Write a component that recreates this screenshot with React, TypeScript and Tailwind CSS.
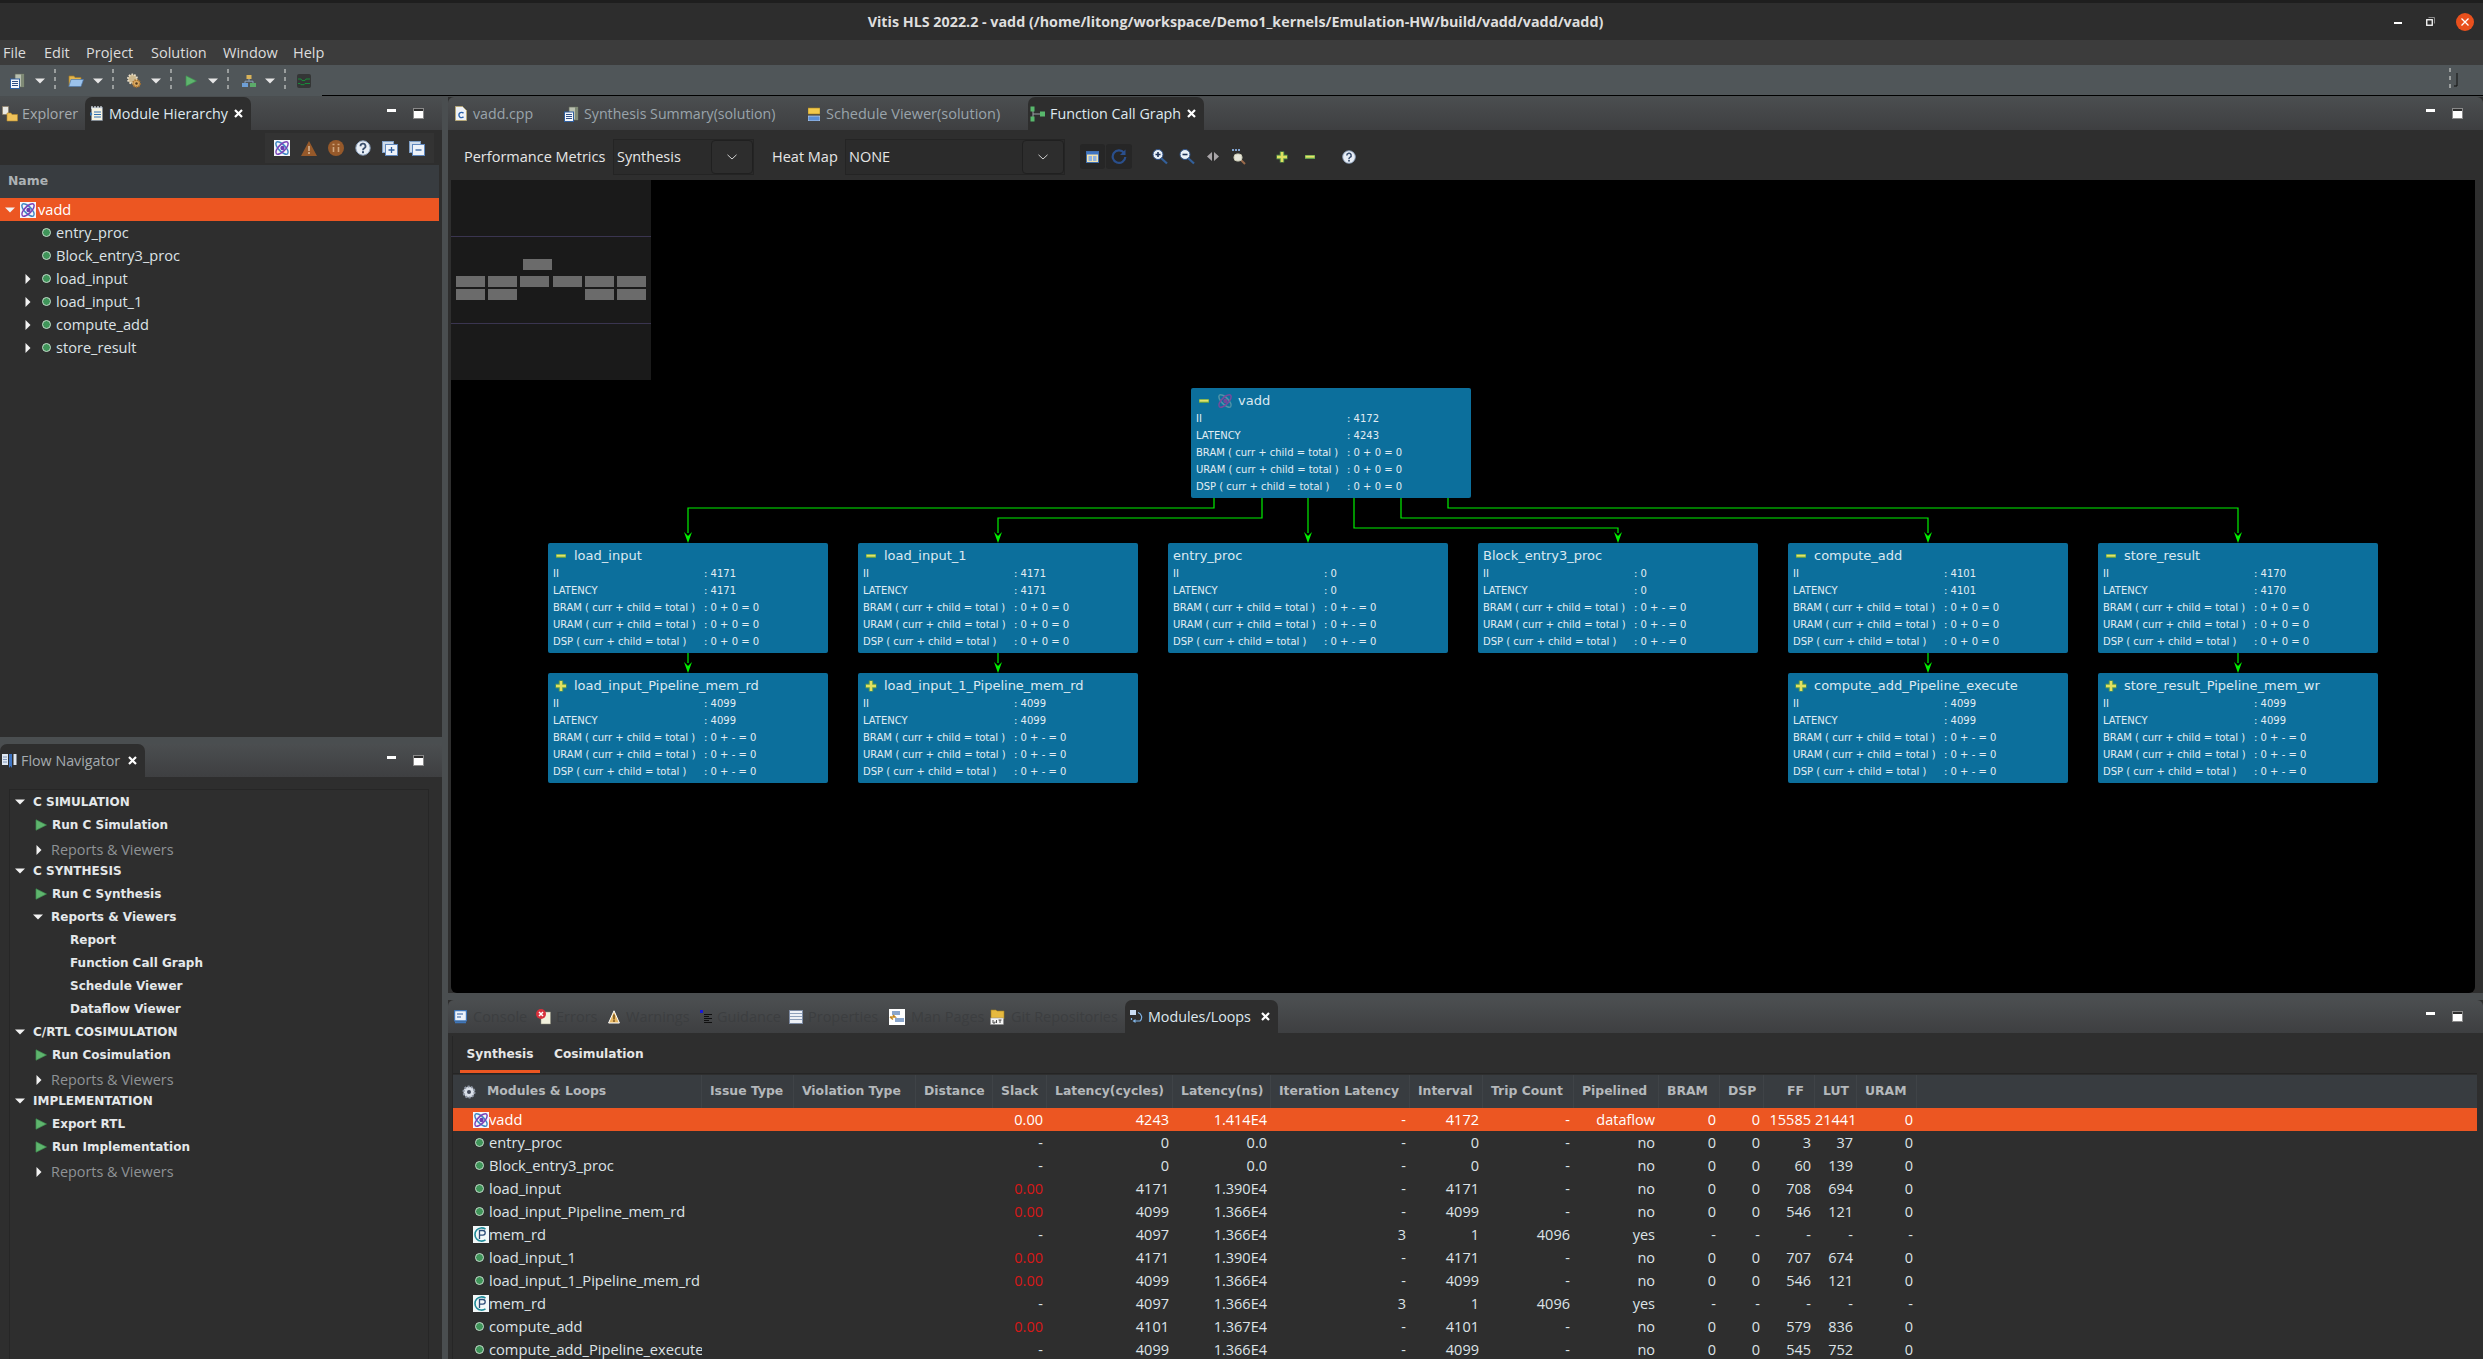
import type { ReactNode } from "react";

const ui = "font-['Open_Sans',sans-serif]";
const bold = "font-['DejaVu_Sans',sans-serif] font-bold";

function Caret({ open, className = "" }: { open?: boolean; className?: string }) {
  return (
    <svg width="10" height="10" viewBox="0 0 10 10" className={`shrink-0 ${className}`}>
      {open ? <path d="M0 2.5h10L5 7.5z" fill="#f2f2f2" /> : <path d="M2.5 0v10L7.5 5z" fill="#f2f2f2" />}
    </svg>
  );
}

function Atom({ size = 16, faded }: { size?: number; faded?: boolean }) {
  return (
    <svg width={size} height={size} viewBox="0 0 16 16" className="shrink-0">
      {!faded && <rect width="16" height="16" fill="#f4f6fa" />}
      <ellipse cx="8" cy="8" rx="8" ry="3.4" transform="rotate(45 8 8)" fill="none" stroke={faded ? "#4f93a8" : "#3f87c4"} strokeWidth="1.5" />
      <ellipse cx="8" cy="8" rx="8" ry="3.4" transform="rotate(-45 8 8)" fill="none" stroke={faded ? "#7a4a9c" : "#7a43b8"} strokeWidth="1.5" />
      <circle cx="8.5" cy="8" r="2.2" fill={faded ? "#73489a" : "#6a3fb0"} />
    </svg>
  );
}

function Pipe() {
  return (
    <svg width="16" height="17" viewBox="0 0 16 17" className="shrink-0">
      <rect width="16" height="17" fill="#f2f7f8" />
      <path d="M12.5 3.2A6.6 6.6 0 1 0 12.5 13.8" fill="none" stroke="#1f8b99" strokeWidth="1.6" />
      <path d="M6.5 13V4.5h3.4a2.3 2.3 0 0 1 0 4.6H6.5" fill="none" stroke="#2b4b78" strokeWidth="1.3" />
    </svg>
  );
}

function Dot() {
  return <span className="block size-[9px] shrink-0 rounded-full border border-[#c4dccb] bg-[#3f9459]" />;
}

function Play() {
  return (
    <svg width="12" height="12" viewBox="0 0 12 12" className="shrink-0">
      <path d="M1 .8 11.5 6 1 11.2z" fill="#5fb56e" stroke="#3f8f52" strokeWidth=".7" />
    </svg>
  );
}

function CloseX() {
  return (
    <svg width="9" height="9" viewBox="0 0 9 9" className="shrink-0">
      <path d="M1 1l7 7M8 1 1 8" stroke="#ffffff" strokeWidth="2.2" />
    </svg>
  );
}

function MinMax() {
  return (
    <div className="flex items-center">
      <span className="mb-[6px] block h-[3px] w-[9px] bg-white" />
      <span className="ml-[18px] block h-[9px] w-[9px] border-t-2 border-[#2e2e2e] bg-white outline outline-[#8a8a8a]" />
    </div>
  );
}

function DropArrow() {
  return (
    <svg width="10" height="6" viewBox="0 0 10 6" className="shrink-0">
      <path d="M0 .5h10L5 5.5z" fill="#e6e6e6" />
    </svg>
  );
}

function Sep() {
  return <span className="block h-[24px] w-[2px] shrink-0 bg-[repeating-linear-gradient(to_bottom,#9a9e9e_0,#9a9e9e_4px,transparent_4px,transparent_8px)]" />;
}

function Chevron() {
  return (
    <svg width="10" height="6" viewBox="0 0 10 6" fill="none">
      <path d="M.5.8 5 5l4.5-4.2" stroke="#d0d0d0" strokeWidth="1" />
    </svg>
  );
}

function Mag({ sign }: { sign: "+" | "-" }) {
  return (
    <svg width="16" height="16" viewBox="0 0 16 16" className="shrink-0">
      <path d="M9 9l6 5.5" stroke="#33609a" strokeWidth="2.2" />
      <circle cx="6" cy="5.5" r="5" fill="#eaf1f8" stroke="#2c4f86" strokeWidth="1" />
      <path d={sign === "+" ? "M3.5 5.5h5M6 3v5" : "M3.5 5.5h5"} stroke="#1f3358" strokeWidth="1.6" />
    </svg>
  );
}

function Help({ size = 16 }: { size?: number }) {
  return (
    <svg width={size} height={size} viewBox="0 0 16 16" className="shrink-0">
      <circle cx="8" cy="8" r="7.2" fill="#e8eef6" stroke="#8aa0bd" />
      <path d="M5.5 6.2a2.5 2.5 0 1 1 3.6 2.2c-.8.4-1.1.8-1.1 1.8" fill="none" stroke="#3a4f6e" strokeWidth="1.8" />
      <rect x="7" y="11.2" width="2" height="2" fill="#3a4f6e" />
    </svg>
  );
}

function PlusMark({ minus }: { minus?: boolean }) {
  if (minus)
    return (
      <svg width="12" height="12" viewBox="0 0 12 12" className="shrink-0">
        <path d="M1 6h10" stroke="#5f9f4c" strokeWidth="4" />
        <path d="M1.5 5.7h9" stroke="#e4e468" strokeWidth="2" />
      </svg>
    );
  return (
    <svg width="12" height="12" viewBox="0 0 12 12" className="shrink-0">
      <path d="M.5 6h11M6 .5v11" stroke="#5f9f4c" strokeWidth="4.4" />
      <path d="M1 6h10M6 1v10" stroke="#dfe060" strokeWidth="2.4" />
    </svg>
  );
}

function DocStack() {
  return (
    <svg width="16" height="16" viewBox="0 0 16 16" className="shrink-0">
      <path d="M5 1h9v13H5z" fill="#b9c0b0" stroke="#5f665a" strokeWidth=".7" />
      <path d="M11 1h3v13h-3z" fill="#7f8a76" />
      <rect x=".5" y="6" width="9" height="9.5" fill="#f4f7fb" stroke="#2f5f9f" />
      <path d="M2 8.5h6M2 10.5h6M2 12.5h6" stroke="#2f4f85" />
    </svg>
  );
}

function Folder() {
  return (
    <svg width="16" height="13" viewBox="0 0 16 13" className="shrink-0">
      <path d="M1 2h5l1 1.5h6V12H1z" fill="#e2b64f" stroke="#a47a22" strokeWidth=".7" />
      <path d="M3 5.5h12.5L13 12.5H.8z" fill="#9cc3ec" stroke="#4a77ad" strokeWidth=".7" />
    </svg>
  );
}

function Gear() {
  return (
    <svg width="16" height="16" viewBox="0 0 16 16" className="shrink-0">
      <circle cx="6.5" cy="6" r="4.5" fill="#cdb98f" stroke="#e8ddc8" strokeWidth="2" strokeDasharray="1.6 1.2" />
      <circle cx="10.5" cy="10.5" r="3.6" fill="#d8a860" stroke="#a9712c" strokeWidth="1.6" strokeDasharray="1.4 1" />
      <circle cx="10.5" cy="10.5" r="1.2" fill="#503a22" />
    </svg>
  );
}

function Hier() {
  return (
    <svg width="14" height="14" viewBox="0 0 14 14" className="shrink-0">
      <rect x="4.5" y="1" width="5" height="4" fill="#d9b35a" />
      <path d="M7 5v2M3 9V7.2h8V9" stroke="#8aa0bd" fill="none" />
      <rect x="0" y="9" width="6" height="4" fill="#6e9fd6" />
      <rect x="8" y="9" width="6" height="4" fill="#5cab6a" />
    </svg>
  );
}

function Wave() {
  return (
    <svg width="14" height="14" viewBox="0 0 14 14" className="shrink-0">
      <rect width="14" height="14" rx="2" fill="#343636" />
      <path d="M1 5h3l1 1.5h3L9 5h4M1 9.5h2l1 1.2h3L8 9.5h5" stroke="#14963a" fill="none" strokeWidth=".9" />
    </svg>
  );
}

function Explorer() {
  return (
    <svg width="16" height="16" viewBox="0 0 16 16" className="shrink-0">
      <rect x="0.5" y="0.5" width="6" height="8" fill="#e9e9e4" stroke="#8a7a60" strokeWidth=".6" />
      <path d="M5 7h4l1 1.5h5.5V15H5z" fill="#efc25a" stroke="#b68a2c" strokeWidth=".6" />
    </svg>
  );
}

function Outline() {
  return (
    <svg width="13" height="15" viewBox="0 0 13 15" className="shrink-0">
      <rect x="1.5" y="1.5" width="11" height="13" fill="#f6f3e2" stroke="#7f8a9a" strokeWidth=".7" />
      <path d="M2 0v3M5 0v3M8 0v3M11 0v3" stroke="#dfe6ef" strokeWidth="1.2" />
      <path d="M4 6h7M4 8.5h7M4 11h7" stroke="#2f6fb0" strokeWidth="1.1" />
      <path d="M0 6l2.5 2L0 10z" fill="#2f6fb0" />
    </svg>
  );
}

function Book() {
  return (
    <svg width="15" height="16" viewBox="0 0 15 16" className="shrink-0">
      <rect x="0" y="1" width="6" height="11" fill="#dfe7f2" />
      <rect x="7" y="1" width="3" height="14" fill="#3f75c4" />
      <path d="M8.5 13l-1.5 2h3z" fill="#2e2e2e" />
      <rect x="11.5" y="1" width="3" height="11" fill="#dfe7f2" />
      <path d="M1 4h4M1 6.5h4M1 9h4" stroke="#7f95b8" />
    </svg>
  );
}

function FileC() {
  return (
    <svg width="12" height="15" viewBox="0 0 12 15" className="shrink-0">
      <path d="M.5.5h7l4 4v10H.5z" fill="#eef2f8" stroke="#b7a878" />
      <path d="M8.5 7.3a2.6 2.6 0 1 0 0 3.4" fill="none" stroke="#2a62ad" strokeWidth="1.4" />
    </svg>
  );
}

function Sched() {
  return (
    <svg width="12" height="14" viewBox="0 0 12 14" className="shrink-0">
      <rect x="0" y="1" width="12" height="6" fill="#f2c94c" stroke="#a37f1d" strokeWidth=".6" />
      <rect x="0" y="9" width="12" height="5" fill="#5b8fd6" stroke="#dfe6ef" strokeWidth=".6" />
    </svg>
  );
}

function CallGraph() {
  return (
    <svg width="15" height="16" viewBox="0 0 15 16" className="shrink-0">
      <path d="M3 3v10M3 8h7" stroke="#9aa0a6" />
      <rect x="0.5" y="0.5" width="4" height="5" fill="#58b86c" />
      <rect x="0.5" y="10.5" width="4" height="5" fill="#58b86c" />
      <rect x="10" y="5.5" width="5" height="5" fill="#58b86c" />
    </svg>
  );
}

function Console() {
  return (
    <svg width="13" height="14" viewBox="0 0 13 14" className="shrink-0">
      <rect x=".5" y=".5" width="12" height="10.5" rx="1" fill="#eef3fa" stroke="#3f75b8" strokeWidth="1.4" />
      <path d="M3 4h6M3 7h4" stroke="#2f5f9f" strokeWidth="1.2" />
      <path d="M1 12.5h11" stroke="#3f75b8" strokeWidth="1.5" />
    </svg>
  );
}

function Errors() {
  return (
    <svg width="15" height="16" viewBox="0 0 15 16" className="shrink-0">
      <path d="M5 3h9.5v12H5z" fill="#f2f0dc" stroke="#8a8a7a" strokeWidth=".5" />
      <circle cx="5" cy="5" r="5" fill="#d8313c" />
      <path d="M3 3l4 4M7 3 3 7" stroke="#ffffff" strokeWidth="1.5" />
    </svg>
  );
}

function Warn() {
  return (
    <svg width="12" height="14" viewBox="0 0 12 14" className="shrink-0">
      <path d="M6 .8 11.4 13H.6z" fill="#e7b762" stroke="#ffffff" strokeWidth="1" />
      <path d="M6 4.5v5" stroke="#6d4a16" strokeWidth="1.5" />
      <rect x="5.2" y="10.2" width="1.6" height="1.6" fill="#6d4a16" />
    </svg>
  );
}

function Guidance() {
  return (
    <svg width="13" height="13" viewBox="0 0 13 13" className="shrink-0">
      <rect x="0" y="0" width="3" height="3" fill="#1818d8" />
      <path d="M4 4.5h8M4 6.5h5M4 8.5h8M4 10.5h5M4 12.5h8" stroke="#101010" />
    </svg>
  );
}

function Props() {
  return (
    <svg width="14" height="14" viewBox="0 0 14 14" className="shrink-0">
      <rect x=".5" y=".5" width="13" height="13" fill="#eef1f6" stroke="#7d8ba3" />
      <path d="M1 3.5h12M1 6.5h12M1 9.5h12" stroke="#8ea0ba" />
    </svg>
  );
}

function ManPages() {
  return (
    <svg width="16" height="16" viewBox="0 0 16 16" className="shrink-0">
      <rect width="16" height="16" fill="#ffffff" />
      <rect x="3" y="2" width="8" height="4" fill="#8aa6cc" />
      <rect x="6" y="9" width="9" height="4" fill="#8aa6cc" />
      <path d="M1 8h5l-2-2M1 8l3 2.5" stroke="#c68a22" strokeWidth="1.6" fill="none" />
    </svg>
  );
}

function GitIcon() {
  return (
    <svg width="15" height="16" viewBox="0 0 15 16" className="shrink-0">
      <path d="M1 1h5l1 1h7v8H1z" fill="#e6b93f" stroke="#a67f1e" strokeWidth=".6" />
      <rect x="0.5" y="9" width="13" height="6.5" fill="#f5f5f5" stroke="#888888" strokeWidth=".5" />
      <path d="M3 11v3h2v-1.5M6.5 11v3M8.5 11h3M10 11v3" stroke="#3a3a3a" fill="none" strokeWidth=".9" />
    </svg>
  );
}

function Loops() {
  return (
    <svg width="13" height="14" viewBox="0 0 13 14" className="shrink-0">
      <rect x="0" y="0" width="6" height="5" fill="#c9dcf3" />
      <path d="M8 2.5a5 5 0 0 1 2 8.5H4.5M1.5 8v2" fill="none" stroke="#7fb2e4" strokeWidth="1.2" />
      <path d="M5.5 9v4L2.5 11z" fill="#7fb2e4" />
    </svg>
  );
}

function TabStrip({ children }: { children: ReactNode }) {
  return (
    <div className="flex h-[33px] shrink-0 items-stretch rounded-t-[6px] bg-gradient-to-b from-[#4b4e50] to-[#3e3f41]">
      {children}
    </div>
  );
}

function ActiveTab({ icon, label, w, pl, gap, xr }: { icon: ReactNode; label: string; w: string; pl: string; gap: string; xr: string }) {
  return (
    <div className={`flex items-center rounded-t-[7px] bg-[#2e2e2e] text-[14.3px] text-[#dfe9f0] whitespace-nowrap ${ui} ${w} ${pl} ${gap}`}>
      {icon}
      <span>{label}</span>
      <span className={`ml-auto ${xr}`}>
        <CloseX />
      </span>
    </div>
  );
}

const treeRows = [
  { name: "entry_proc", arrow: false },
  { name: "Block_entry3_proc", arrow: false },
  { name: "load_input", arrow: true },
  { name: "load_input_1", arrow: true },
  { name: "compute_add", arrow: true },
  { name: "store_result", arrow: true },
];

function HierarchyPanel() {
  return (
    <div className="flex h-[640px] shrink-0 flex-col bg-[#2e2e2e]">
      <div className="flex h-[33px] shrink-0 items-stretch bg-gradient-to-b from-[#4b4e50] to-[#3e3f41]">
        <div className={`flex w-[85px] items-center gap-[4px] pl-[2px] text-[14.3px] text-[#a5abaf] ${ui}`}>
          <Explorer />
          <span>Explorer</span>
        </div>
        <ActiveTab icon={<Outline />} label="Module Hierarchy" w="w-[166px]" pl="pl-[5px]" gap="gap-[6px]" xr="mr-[8px]" />
        <div className="ml-auto mr-[19px] flex items-center">
          <MinMax />
        </div>
      </div>
      <div className="mt-[3px] flex h-[30px] shrink-0 justify-end pr-[8px]">
        <div className="flex w-[169px] items-center gap-[11px] bg-[#333333] pl-[9px]">
          <Atom />
          <svg width="16" height="15" viewBox="0 0 16 15" className="shrink-0">
            <path d="M8 0 16 15H0z" fill="#96592a" />
            <rect x="7" y="5" width="2" height="5" fill="#c9a27e" />
            <rect x="7" y="11" width="2" height="2" fill="#c9a27e" />
          </svg>
          <svg width="16" height="16" viewBox="0 0 16 16" className="shrink-0">
            <circle cx="8" cy="8" r="8" fill="#96592a" />
            <path d="M5.5 7v5M10.5 7v5M4.5 4.5h2M9.5 4.5h2" stroke="#cfa57c" strokeWidth="1.6" />
          </svg>
          <Help />
          <svg width="16" height="15" viewBox="0 0 16 15" className="shrink-0">
            <rect x=".5" y=".5" width="11" height="11" fill="#cfdbea" stroke="#7f9fc7" />
            <rect x="3.5" y="3.5" width="12" height="11" fill="#eef3fa" stroke="#5f87bd" />
            <path d="M6.5 9h6M9.5 6v6" stroke="#2f5f9f" strokeWidth="1.3" />
          </svg>
          <svg width="16" height="15" viewBox="0 0 16 15" className="shrink-0">
            <rect x=".5" y=".5" width="11" height="11" fill="#cfdbea" stroke="#7f9fc7" />
            <rect x="3.5" y="3.5" width="12" height="11" fill="#eef3fa" stroke="#5f87bd" />
            <path d="M6.5 9h6" stroke="#2f5f9f" strokeWidth="1.3" />
          </svg>
        </div>
      </div>
      <div className="mt-[2px] mr-[3px] flex h-[33px] shrink-0 items-center bg-[#383c40] pl-[8px]">
        <span className={`text-[12.4px] text-[#adb2b5] ${bold}`}>Name</span>
      </div>
      <div className={`mr-[3px] text-[14.6px] text-[#dde3e7] ${ui}`}>
        <div className="flex h-[23px] items-center bg-[#ec5622] pl-[5px] text-white">
          <Caret open />
          <span className="ml-[5px]">
            <Atom />
          </span>
          <span className="ml-[2px]">vadd</span>
        </div>
        {treeRows.map((row) => (
          <div key={row.name} className="flex h-[23px] items-center pl-[23px]">
            <span className="w-[19px]">{row.arrow && <Caret />}</span>
            <Dot />
            <span className="ml-[5px]">{row.name}</span>
          </div>
        ))}
      </div>
    </div>
  );
}

type NavRow = { label: string; kind: "head" | "run" | "muted" | "open" | "leaf" };

const navRows: NavRow[] = [
  { label: "C SIMULATION", kind: "head" },
  { label: "Run C Simulation", kind: "run" },
  { label: "Reports & Viewers", kind: "muted" },
  { label: "C SYNTHESIS", kind: "head" },
  { label: "Run C Synthesis", kind: "run" },
  { label: "Reports & Viewers", kind: "open" },
  { label: "Report", kind: "leaf" },
  { label: "Function Call Graph", kind: "leaf" },
  { label: "Schedule Viewer", kind: "leaf" },
  { label: "Dataflow Viewer", kind: "leaf" },
  { label: "C/RTL COSIMULATION", kind: "head" },
  { label: "Run Cosimulation", kind: "run" },
  { label: "Reports & Viewers", kind: "muted" },
  { label: "IMPLEMENTATION", kind: "head" },
  { label: "Export RTL", kind: "run" },
  { label: "Run Implementation", kind: "run" },
  { label: "Reports & Viewers", kind: "muted" },
];

function FlowRow({ row }: { row: NavRow }) {
  const strong = `text-[12px] text-[#e4e8ea] ${bold}`;
  if (row.kind === "head")
    return (
      <div className="flex h-[23px] items-center pl-[5px]">
        <Caret open />
        <span className={`ml-[8px] ${strong}`}>{row.label}</span>
      </div>
    );
  if (row.kind === "run")
    return (
      <div className="flex h-[23px] items-center pl-[25px]">
        <Play />
        <span className={`ml-[5px] ${strong}`}>{row.label}</span>
      </div>
    );
  if (row.kind === "open")
    return (
      <div className="flex h-[23px] items-center pl-[23px]">
        <Caret open />
        <span className={`ml-[8px] ${strong}`}>{row.label}</span>
      </div>
    );
  if (row.kind === "muted")
    return (
      <div className="flex h-[23px] items-center pl-[24px] pt-[4px]">
        <Caret />
        <span className={`ml-[7px] text-[14.4px] text-[#8f9396] ${ui}`}>{row.label}</span>
      </div>
    );
  return (
    <div className="flex h-[23px] items-center pl-[60px]">
      <span className={strong}>{row.label}</span>
    </div>
  );
}

function FlowPanel() {
  return (
    <div className="mt-[7px] flex min-h-0 flex-1 flex-col bg-[#2e2e2e]">
      <div className="flex h-[33px] shrink-0 items-stretch bg-gradient-to-b from-[#4b4e50] to-[#3e3f41]">
        <div className={`flex w-[145px] items-center gap-[4px] rounded-t-[7px] bg-[#2e2e2e] pl-[2px] text-[14.3px] text-[#a5abaf] ${ui}`}>
          <Book />
          <span>Flow Navigator</span>
          <span className="ml-auto mr-[8px]">
            <CloseX />
          </span>
        </div>
        <div className="ml-auto mr-[19px] flex items-center">
          <MinMax />
        </div>
      </div>
      <div className="ml-[9px] mr-[13px] mt-[12px] min-h-0 flex-1 border border-b-0 border-[#262626]">
        {navRows.map((row, i) => (
          <FlowRow key={i} row={row} />
        ))}
      </div>
    </div>
  );
}

function Combo({ value, w }: { value: string; w: string }) {
  return (
    <div className={`flex h-[36px] items-stretch border border-[#242424] bg-[#2b2b2b] ${w}`}>
      <span className={`flex flex-1 items-center pl-[3px] text-[14.5px] text-[#e6e6e6] ${ui}`}>{value}</span>
      <span className="flex w-[42px] items-center justify-center rounded-[4px] border border-[#202020] bg-[#2d2d2d]">
        <Chevron />
      </span>
    </div>
  );
}

function GraphToolbar() {
  return (
    <div className={`flex h-[47px] shrink-0 items-center bg-[#2e2e2e] pl-[13px] text-[14.5px] text-[#e6e6e6] ${ui}`}>
      <span className="w-[149px] whitespace-nowrap">Performance Metrics</span>
      <Combo value="Synthesis" w="w-[141px]" />
      <span className="ml-[18px] w-[73px] whitespace-nowrap">Heat Map</span>
      <Combo value="NONE" w="w-[220px]" />
      <div className="ml-[15px] flex gap-px">
        <span className="flex h-[25px] w-[25px] items-center justify-center rounded-[3px] bg-[#262626]">
          <svg width="13" height="12" viewBox="0 0 13 12">
            <rect x=".5" y=".5" width="12" height="11" fill="#f3e3ae" stroke="#3f6fb0" />
            <rect x="1" y="1" width="11" height="2.5" fill="#3f75c4" />
            <rect x="2.5" y="5" width="3.5" height="5" fill="#8fb4e4" />
            <rect x="7" y="5" width="3.5" height="5" fill="#8fb4e4" />
          </svg>
        </span>
        <span className="flex h-[25px] w-[26px] items-center justify-center rounded-[3px] bg-[#262626]">
          <svg width="16" height="16" viewBox="0 0 16 16" fill="none">
            <path d="M13 3.8A6.3 6.3 0 1 0 14.3 8" stroke="#2a4f8c" strokeWidth="2.2" />
            <path d="M14.5 .5v5.5H9z" fill="#2a4f8c" />
          </svg>
        </span>
      </div>
      <span className="ml-[20px] flex">
        <Mag sign="+" />
      </span>
      <span className="ml-[11px] flex">
        <Mag sign="-" />
      </span>
      <svg width="12" height="9" viewBox="0 0 12 9" className="ml-[12px]">
        <path d="M5 0v9L0 4.5zM7 0v9l5-4.5z" fill="#a9a5a8" />
      </svg>
      <svg width="16" height="17" viewBox="0 0 16 17" className="ml-[12px]">
        <path d="M1 2h8" stroke="#7fa0cc" strokeWidth="2" strokeDasharray="2 1" />
        <path d="M10 12l4 4" stroke="#9a6a4a" strokeWidth="2" />
        <rect x="3" y="6" width="8" height="7" rx="3" fill="#e6e6da" stroke="#c9c9b2" />
      </svg>
      <span className="ml-[29px] flex">
        <PlusMark />
      </span>
      <span className="ml-[16px] flex">
        <PlusMark minus />
      </span>
      <span className="ml-[26px] flex">
        <Help size={14} />
      </span>
    </div>
  );
}

type GraphNode = {
  title: string;
  pos: string;
  mark?: "plus" | "minus";
  vals: string;
  ii: string;
  lat: string;
  atom?: boolean;
};

const graphNodes: GraphNode[] = [
  { title: "vadd", pos: "left-[740px] top-[208px]", mark: "minus", atom: true, ii: "4172", lat: "4243", vals: "0 + 0 = 0" },
  { title: "load_input", pos: "left-[97px] top-[363px]", mark: "minus", ii: "4171", lat: "4171", vals: "0 + 0 = 0" },
  { title: "load_input_1", pos: "left-[407px] top-[363px]", mark: "minus", ii: "4171", lat: "4171", vals: "0 + 0 = 0" },
  { title: "entry_proc", pos: "left-[717px] top-[363px]", ii: "0", lat: "0", vals: "0 + - = 0" },
  { title: "Block_entry3_proc", pos: "left-[1027px] top-[363px]", ii: "0", lat: "0", vals: "0 + - = 0" },
  { title: "compute_add", pos: "left-[1337px] top-[363px]", mark: "minus", ii: "4101", lat: "4101", vals: "0 + 0 = 0" },
  { title: "store_result", pos: "left-[1647px] top-[363px]", mark: "minus", ii: "4170", lat: "4170", vals: "0 + 0 = 0" },
  { title: "load_input_Pipeline_mem_rd", pos: "left-[97px] top-[493px]", mark: "plus", ii: "4099", lat: "4099", vals: "0 + - = 0" },
  { title: "load_input_1_Pipeline_mem_rd", pos: "left-[407px] top-[493px]", mark: "plus", ii: "4099", lat: "4099", vals: "0 + - = 0" },
  { title: "compute_add_Pipeline_execute", pos: "left-[1337px] top-[493px]", mark: "plus", ii: "4099", lat: "4099", vals: "0 + - = 0" },
  { title: "store_result_Pipeline_mem_wr", pos: "left-[1647px] top-[493px]", mark: "plus", ii: "4099", lat: "4099", vals: "0 + - = 0" },
];

function NodeRow({ label, value }: { label: string; value: string }) {
  return (
    <div className="grid h-[17px] grid-cols-[151px_1fr] items-center pl-[5px] text-[10px] leading-none text-[#e2edf3]">
      <span className="whitespace-nowrap">{label}</span>
      <span className="whitespace-nowrap">: {value}</span>
    </div>
  );
}

function Node({ node }: { node: GraphNode }) {
  return (
    <div className={`absolute h-[110px] w-[280px] rounded-[2px] bg-[#0c6f9c] font-['DejaVu_Sans',sans-serif] ${node.pos}`}>
      <div className={`flex h-[22px] items-center pt-[3px] text-[13px] text-[#dbe9f1] ${node.mark ? "pl-[7px]" : "pl-[5px]"}`}>
        {node.mark && (
          <span className="mr-[7px] flex">
            <PlusMark minus={node.mark === "minus"} />
          </span>
        )}
        {node.atom && (
          <span className="mr-[5px] flex">
            <Atom faded />
          </span>
        )}
        <span>{node.title}</span>
      </div>
      <NodeRow label="II" value={node.ii} />
      <NodeRow label="LATENCY" value={node.lat} />
      <NodeRow label="BRAM ( curr + child = total )" value={node.vals} />
      <NodeRow label="URAM ( curr + child = total )" value={node.vals} />
      <NodeRow label="DSP ( curr + child = total )" value={node.vals} />
    </div>
  );
}

const edgePaths = [
  "M1214 498V508H688V533",
  "M1262 498V518H998V533",
  "M1308 498V533",
  "M1354 498V528H1618V533",
  "M1401 498V518H1928V533",
  "M1448 498V508H2238V533",
  "M688 653V663",
  "M998 653V663",
  "M1928 653V663",
  "M2238 653V663",
];

const arrowTips: [number, number][] = [
  [688, 543],
  [998, 543],
  [1308, 543],
  [1618, 543],
  [1928, 543],
  [2238, 543],
  [688, 673],
  [998, 673],
  [1928, 673],
  [2238, 673],
];

function GraphCanvas() {
  return (
    <div className="relative mr-[2px] min-h-0 flex-1 overflow-hidden rounded-b-[6px] bg-black">
      <svg className="absolute inset-0 h-full w-full">
        <g transform="translate(-451 -180)">
          {edgePaths.map((d) => (
            <path key={d} d={d} fill="none" stroke="#00f000" strokeWidth="1.2" />
          ))}
          {arrowTips.map(([x, y]) => (
            <path key={`${x}-${y}`} d={`M${x} ${y}L${x - 4} ${y - 11}L${x} ${y - 7}L${x + 4} ${y - 11}z`} fill="#00f000" />
          ))}
        </g>
      </svg>
      {graphNodes.map((node) => (
        <Node key={node.title} node={node} />
      ))}
      <Minimap />
    </div>
  );
}

const miniCells = [
  "left-[72px] top-[79px]",
  "left-[5px] top-[96px]",
  "left-[37px] top-[96px]",
  "left-[69px] top-[96px]",
  "left-[102px] top-[96px]",
  "left-[134px] top-[96px]",
  "left-[166px] top-[96px]",
  "left-[5px] top-[109px]",
  "left-[37px] top-[109px]",
  "left-[134px] top-[109px]",
  "left-[166px] top-[109px]",
];

function Minimap() {
  return (
    <div className="absolute left-0 top-0 h-[200px] w-[200px] bg-[#1a1a1a]">
      <div className="absolute left-0 top-[56px] h-px w-full bg-[#3a3550]" />
      <div className="absolute left-0 top-[143px] h-px w-full bg-[#3a3550]" />
      {miniCells.map((c) => (
        <div key={c} className={`absolute h-[11px] w-[29px] bg-[#6b6b6b] ${c}`} />
      ))}
    </div>
  );
}

function EditorPanel() {
  return (
    <div className="flex h-[896px] shrink-0 flex-col bg-[#2e2e2e]">
      <TabStrip>
        <div className={`flex w-[110px] items-center gap-[6px] pl-[7px] text-[14.2px] text-[#9aa4ab] ${ui}`}>
          <FileC />
          <span>vadd.cpp</span>
        </div>
        <div className={`flex w-[250px] items-center gap-[4px] pl-[6px] text-[14.2px] text-[#9aa4ab] whitespace-nowrap ${ui}`}>
          <DocStack />
          <span>Synthesis Summary(solution)</span>
        </div>
        <div className={`flex w-[220px] items-center gap-[6px] text-[14.5px] text-[#9aa4ab] whitespace-nowrap ${ui}`}>
          <Sched />
          <span>Schedule Viewer(solution)</span>
        </div>
        <ActiveTab icon={<CallGraph />} label="Function Call Graph" w="w-[176px]" pl="pl-[2px]" gap="gap-[5px]" xr="mr-[8px]" />
        <div className="ml-auto mr-[21px] flex items-center">
          <MinMax />
        </div>
      </TabStrip>
      <div className="flex min-h-0 flex-1 flex-col pl-[3px] pr-[6px] pt-[3px]">
        <GraphToolbar />
        <GraphCanvas />
      </div>
    </div>
  );
}

const cols =
  "grid grid-cols-[249px_92px_122px_77px_54px_126px_98px_139px_73px_91px_85px_61px_44px_51px_42px_60px]";

type Row = { icon: "atom" | "pipe" | "dot"; cells: string[]; redSlack?: boolean };

const tableRows: Row[] = [
  { icon: "atom", cells: ["vadd", "", "", "", "0.00", "4243", "1.414E4", "-", "4172", "-", "dataflow", "0", "0", "15585", "21441", "0"] },
  { icon: "dot", cells: ["entry_proc", "", "", "", "-", "0", "0.0", "-", "0", "-", "no", "0", "0", "3", "37", "0"] },
  { icon: "dot", cells: ["Block_entry3_proc", "", "", "", "-", "0", "0.0", "-", "0", "-", "no", "0", "0", "60", "139", "0"] },
  { icon: "dot", redSlack: true, cells: ["load_input", "", "", "", "0.00", "4171", "1.390E4", "-", "4171", "-", "no", "0", "0", "708", "694", "0"] },
  { icon: "dot", redSlack: true, cells: ["load_input_Pipeline_mem_rd", "", "", "", "0.00", "4099", "1.366E4", "-", "4099", "-", "no", "0", "0", "546", "121", "0"] },
  { icon: "pipe", cells: ["mem_rd", "", "", "", "-", "4097", "1.366E4", "3", "1", "4096", "yes", "-", "-", "-", "-", "-"] },
  { icon: "dot", redSlack: true, cells: ["load_input_1", "", "", "", "0.00", "4171", "1.390E4", "-", "4171", "-", "no", "0", "0", "707", "674", "0"] },
  { icon: "dot", redSlack: true, cells: ["load_input_1_Pipeline_mem_rd", "", "", "", "0.00", "4099", "1.366E4", "-", "4099", "-", "no", "0", "0", "546", "121", "0"] },
  { icon: "pipe", cells: ["mem_rd", "", "", "", "-", "4097", "1.366E4", "3", "1", "4096", "yes", "-", "-", "-", "-", "-"] },
  { icon: "dot", redSlack: true, cells: ["compute_add", "", "", "", "0.00", "4101", "1.367E4", "-", "4101", "-", "no", "0", "0", "579", "836", "0"] },
  { icon: "dot", cells: ["compute_add_Pipeline_execute", "", "", "", "-", "4099", "1.366E4", "-", "4099", "-", "no", "0", "0", "545", "752", "0"] },
];

const headers = [
  "Issue Type",
  "Violation Type",
  "Distance",
  "Slack",
  "Latency(cycles)",
  "Latency(ns)",
  "Iteration Latency",
  "Interval",
  "Trip Count",
  "Pipelined",
  "BRAM",
  "DSP",
  "FF",
  "LUT",
  "URAM",
];

function ResultsPanel() {
  const inactive = `flex items-center text-[14.5px] text-[#3c3e40] whitespace-nowrap ${ui}`;
  return (
    <div className="mt-[7px] flex min-h-0 flex-1 flex-col bg-[#2e2e2e]">
      <TabStrip>
        <div className={`w-[84px] gap-[6px] pl-[6px] ${inactive}`}>
          <Console />
          <span>Console</span>
        </div>
        <div className={`w-[72px] gap-[5px] pl-[4px] ${inactive}`}>
          <Errors />
          <span>Errors</span>
        </div>
        <div className={`w-[92px] gap-[6px] pl-[4px] ${inactive}`}>
          <Warn />
          <span>Warnings</span>
        </div>
        <div className={`w-[89px] gap-[4px] pl-[4px] ${inactive}`}>
          <Guidance />
          <span>Guidance</span>
        </div>
        <div className={`w-[100px] gap-[5px] pl-[4px] ${inactive}`}>
          <Props />
          <span>Properties</span>
        </div>
        <div className={`w-[102px] gap-[6px] pl-[4px] ${inactive}`}>
          <ManPages />
          <span>Man Pages</span>
        </div>
        <div className={`w-[138px] gap-[6px] pl-[3px] ${inactive}`}>
          <GitIcon />
          <span>Git Repositories</span>
        </div>
        <ActiveTab icon={<Loops />} label="Modules/Loops" w="w-[153px]" pl="pl-[5px]" gap="gap-[5px]" xr="mr-[8px]" />
        <div className="ml-auto mr-[21px] flex items-center">
          <MinMax />
        </div>
      </TabStrip>
      <div className="ml-[4px] mr-[6px] mt-[3px] min-h-0 flex-1 overflow-hidden border-l border-[#262626]">
        <div className={`flex h-[38px] items-end border-b border-[#252525] pl-[7px] text-[12.2px] text-[#e6e6e6] ${bold}`}>
          <span className="flex h-[37px] w-[80px] items-center justify-center border-b-[3px] border-[#ec5622] pt-[3px]">Synthesis</span>
          <span className="flex h-[37px] items-center pl-[14px] pb-[0px]">Cosimulation</span>
        </div>
        <div className={`mt-px flex h-[33px] items-stretch bg-[#383c40] text-[12.4px] text-[#b4b8bb] ${cols} ${bold}`}>
          <div className="flex items-center gap-[10px] border-r border-[#3f4347] pl-[8px]">
            <svg width="16" height="16" viewBox="0 0 16 16" className="shrink-0">
              <circle cx="8" cy="8" r="5.5" fill="#d9dfe8" stroke="#8d95a3" strokeWidth="2" strokeDasharray="2 1.4" />
              <circle cx="8" cy="8" r="2" fill="#414858" />
            </svg>
            <span className="whitespace-nowrap">Modules &amp; Loops</span>
          </div>
          {headers.map((h) => (
            <div
              key={h}
              className={`flex items-center overflow-hidden whitespace-nowrap border-r border-[#3f4347] ${h === "FF" ? "pl-[23px]" : "pl-[8px]"}`}
            >
              {h}
            </div>
          ))}
        </div>
        <div className={`text-[14.5px] text-[#dde3e7] ${ui}`}>
          {tableRows.map((row, i) => (
            <div key={i} className={`h-[23px] items-center ${cols} ${i === 0 ? "bg-[#ec5622] text-white" : ""}`}>
              <div className="flex h-[23px] items-center overflow-hidden whitespace-nowrap text-[14.7px]">
                {row.icon === "dot" ? (
                  <span className="ml-[22px] mr-[5px] flex">
                    <Dot />
                  </span>
                ) : (
                  <span className="ml-[20px] flex">{row.icon === "atom" ? <Atom /> : <Pipe />}</span>
                )}
                <span>{row.cells[0]}</span>
              </div>
              {row.cells.slice(1).map((c, j) => (
                <div
                  key={j}
                  className={`whitespace-nowrap pr-[4px] text-right ${j === 3 && row.redSlack ? "text-[#d81818]" : ""}`}
                >
                  {c}
                </div>
              ))}
            </div>
          ))}
        </div>
      </div>
    </div>
  );
}

const menus = [
  { label: "File", w: "w-[41px]" },
  { label: "Edit", w: "w-[42px]" },
  { label: "Project", w: "w-[65px]" },
  { label: "Solution", w: "w-[72px]" },
  { label: "Window", w: "w-[70px]" },
  { label: "Help", w: "w-[40px]" },
];

export default function App() {
  return (
    <div className="flex h-[1359px] w-[2483px] flex-col overflow-hidden bg-[#4a4e50]">
      <div className="relative flex h-[40px] shrink-0 items-center justify-center border-t-[3px] border-[#1e1e1e] bg-[#2d2d2d] pr-[12px]">
        <span className={`text-[14.3px] font-bold text-[#dedede] ${ui}`}>
          Vitis HLS 2022.2 - vadd (/home/litong/workspace/Demo1_kernels/Emulation-HW/build/vadd/vadd/vadd)
        </span>
        <div className="absolute right-[9px] top-0 flex h-full items-center">
          <span className="mt-[3px] block h-[2px] w-[8px] bg-white" />
          <svg width="9" height="9" viewBox="0 0 9 9" className="ml-[24px]">
            <path d="M2.5.5h6v6" fill="none" stroke="#8a8a8a" />
            <rect x=".75" y="2.75" width="5.5" height="5.5" fill="none" stroke="#ffffff" strokeWidth="1.3" />
          </svg>
          <span className="ml-[21px] flex size-[18px] items-center justify-center rounded-full bg-[#e9501d]">
            <svg width="8" height="8" viewBox="0 0 8 8">
              <path d="M.5.5l7 7M7.5.5l-7 7" stroke="#ffffff" strokeWidth="1.3" />
            </svg>
          </span>
        </div>
      </div>
      <div className={`flex h-[25px] shrink-0 items-center bg-[#3c3c3c] pl-[3px] text-[14.5px] text-[#dcdcdc] ${ui}`}>
        {menus.map((m) => (
          <span key={m.label} className={m.w}>
            {m.label}
          </span>
        ))}
      </div>
      <div className="relative flex h-[31px] shrink-0 items-center bg-[#505659] pl-[10px]">
        <DocStack />
        <span className="mx-[9px] flex">
          <DropArrow />
        </span>
        <Sep />
        <span className="ml-[12px] flex">
          <Folder />
        </span>
        <span className="mx-[9px] flex">
          <DropArrow />
        </span>
        <Sep />
        <span className="ml-[12px] flex">
          <Gear />
        </span>
        <span className="mx-[9px] flex">
          <DropArrow />
        </span>
        <Sep />
        <span className="ml-[13px] flex">
          <Play />
        </span>
        <span className="ml-[11px] mr-[9px] flex">
          <DropArrow />
        </span>
        <Sep />
        <span className="ml-[13px] flex">
          <Hier />
        </span>
        <span className="mx-[9px] flex">
          <DropArrow />
        </span>
        <Sep />
        <span className="ml-[11px] flex">
          <Wave />
        </span>
        <span className="ml-[11px] mb-0 h-px flex-1 self-end bg-black" />
        <span className="absolute right-[25px] top-[3px] flex h-[24px] items-center gap-[3px]">
          <Sep />
          <svg width="4" height="14" viewBox="0 0 4 14">
            <path d="M3 0v13H0" fill="none" stroke="#111111" strokeWidth="1" />
          </svg>
        </span>
      </div>
      <div className="flex min-h-0 flex-1 pt-px">
        <div className="flex w-[442px] shrink-0 flex-col">
          <HierarchyPanel />
          <FlowPanel />
        </div>
        <div className="ml-[6px] flex min-w-0 flex-1 flex-col">
          <EditorPanel />
          <ResultsPanel />
        </div>
      </div>
    </div>
  );
}
